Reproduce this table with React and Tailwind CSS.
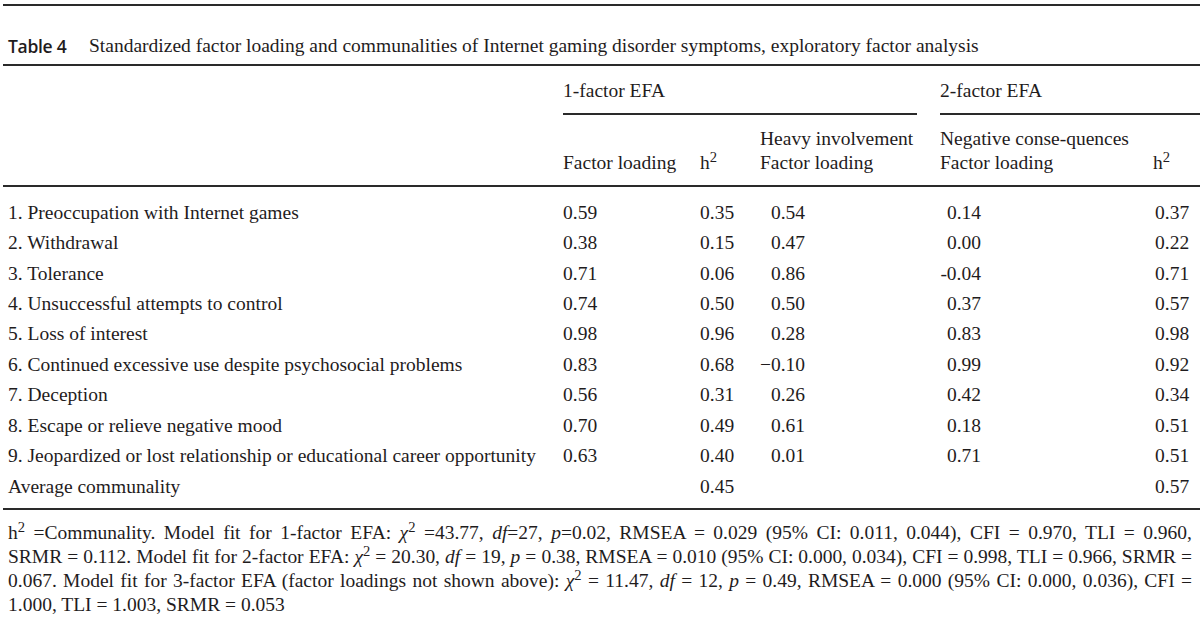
const ROWS = [
  ["1. Preoccupation with Internet games", "0.59", "0.35", "0.54", "0.14", "0.37"],
  ["2. Withdrawal", "0.38", "0.15", "0.47", "0.00", "0.22"],
  ["3. Tolerance", "0.71", "0.06", "0.86", "-0.04", "0.71"],
  ["4. Unsuccessful attempts to control", "0.74", "0.50", "0.50", "0.37", "0.57"],
  ["5. Loss of interest", "0.98", "0.96", "0.28", "0.83", "0.98"],
  ["6. Continued excessive use despite psychosocial problems", "0.83", "0.68", "\u22120.10", "0.99", "0.92"],
  ["7. Deception", "0.56", "0.31", "0.26", "0.42", "0.34"],
  ["8. Escape or relieve negative mood", "0.70", "0.49", "0.61", "0.18", "0.51"],
  ["9. Jeopardized or lost relationship or educational career opportunity", "0.63", "0.40", "0.01", "0.71", "0.51"],
  ["Average communality", "", "0.45", "", "", "0.57"],
];

const GRID = "grid grid-cols-[560px_137px_60px_180px_213px_1fr]";

function Chi() {
  return (
    <>
      <i>χ</i>
      <sup>2</sup>
    </>
  );
}

export default function App() {
  return (
    <div
      className="w-[1200px] h-[625px] bg-white text-[#1f1c1d] text-[19.5px] leading-[24px] overflow-hidden"
      style={{ fontFamily: '"Liberation Serif", "Times New Roman", serif' }}
    >
      <div className="ml-[3px] mt-[4px] border-t-2 border-[#2a2a2a]">
        <div className="pt-[28px] pb-[6px] pl-[5px] border-b-2 border-[#2a2a2a] flex">
          <span
            className="font-semibold w-[81px] text-[17.5px] tracking-[-0.3px]"
            style={{ fontFamily: '"Open Sans", "Liberation Sans", sans-serif' }}
          >
            Table 4
          </span>
          <span>
            Standardized factor loading and communalities of Internet gaming disorder symptoms, exploratory factor analysis
          </span>
        </div>

        <div className={`${GRID} pt-[13px]`}>
          <div />
          <div className="col-span-3 mr-[23px] pb-[10px] border-b-2 border-[#2a2a2a]">1-factor EFA</div>
          <div className="col-span-2 pb-[10px] border-b-2 border-[#2a2a2a]">2-factor EFA</div>
        </div>

        <div className={`${GRID} pt-[12px] pb-[10px] border-b-2 border-[#2a2a2a]`}>
          <div />
          <div className="flex items-end">Factor loading</div>
          <div className="flex items-end">
            <span>
              h<sup>2</sup>
            </span>
          </div>
          <div>
            Heavy involvement
            <br />
            Factor loading
          </div>
          <div>
            Negative conse-quences
            <br />
            Factor loading
          </div>
          <div className="flex items-end">
            <span>
              h<sup>2</sup>
            </span>
          </div>
        </div>

        <div className="pt-[10.5px] pb-[6.5px] border-b-2 border-[#2a2a2a]">
          {ROWS.map((r, i) => (
            <div key={i} className={`${GRID} h-[30.44px] items-center`}>
              <div className="pl-[5px] whitespace-nowrap">{r[0]}</div>
              <div>{r[1]}</div>
              <div>{r[2]}</div>
              <div>
                <span className="inline-block w-[45px] text-right">{r[3]}</span>
              </div>
              <div>
                <span className="inline-block w-[41px] text-right">{r[4]}</span>
              </div>
              <div className="pl-[2px]">{r[5]}</div>
            </div>
          ))}
        </div>

        <div className="pt-[11px] pl-[5px] pr-[8px] text-justify">
          <div className="[text-align-last:justify]">
            h<sup>2</sup> =Communality. Model fit for 1-factor EFA: <Chi /> =43.77, <i>df</i>=27, <i>p</i>=0.02, RMSEA = 0.029 (95% CI: 0.011, 0.044), CFI = 0.970, TLI = 0.960,
          </div>
          <div className="[text-align-last:justify] tracking-[-0.02px]">
            SRMR = 0.112. Model fit for 2-factor EFA: <Chi /> = 20.30, <i>df</i> = 19, <i>p</i> = 0.38, RMSEA = 0.010 (95% CI: 0.000, 0.034), CFI = 0.998, TLI = 0.966, SRMR =
          </div>
          <div className="[text-align-last:justify]">
            0.067. Model fit for 3-factor EFA (factor loadings not shown above): <Chi /> = 11.47, <i>df</i> = 12, <i>p</i> = 0.49, RMSEA = 0.000 (95% CI: 0.000, 0.036), CFI =
          </div>
          <div>1.000, TLI = 1.003, SRMR = 0.053</div>
        </div>
      </div>
    </div>
  );
}
